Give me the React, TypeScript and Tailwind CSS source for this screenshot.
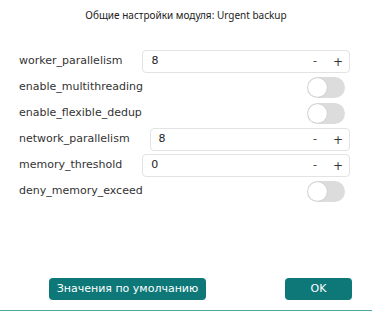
type Setting =
  | { key: string; kind: 'number'; value: number }
  | { key: string; kind: 'toggle'; value: boolean }

const settings: Setting[] = [
  { key: 'worker_parallelism', kind: 'number', value: 8 },
  { key: 'enable_multithreading', kind: 'toggle', value: false },
  { key: 'enable_flexible_dedup', kind: 'toggle', value: false },
  { key: 'network_parallelism', kind: 'number', value: 8 },
  { key: 'memory_threshold', kind: 'number', value: 0 },
  { key: 'deny_memory_exceed', kind: 'toggle', value: false }
]

function NumberField({ value }: { value: number }) {
  return (
    <div className="flex flex-1 items-center h-[23px] pl-[8px] pr-[6px] border border-[#e3e3e3] rounded-[4px] bg-white">
      <span className="flex-1 text-[11px] text-[#222]">{value}</span>
      <span className="w-[10px] text-center text-[11px] text-[#333] mr-[13px]">-</span>
      <span className="w-[10px] text-center text-[12px] text-[#333]">+</span>
    </div>
  )
}

function Toggle({ on }: { on: boolean }) {
  return (
    <div className="flex-1 flex justify-end pr-[5px]">
      <div
        className={`w-[38px] h-[21px] rounded-full p-[1px] flex items-center ${
          on ? 'bg-[#0f7a7a] justify-end' : 'bg-[#dcdcdc] justify-start'
        }`}
      >
        <div className="w-[19px] h-[19px] rounded-full bg-white shadow-[0_0_1px_rgba(0,0,0,0.25)]" />
      </div>
    </div>
  )
}

export default function App() {
  return (
    <div
      className="w-[372px] h-[311px] bg-white flex flex-col text-[#2a2a2a]"
      style={{ fontFamily: '"DejaVu Sans", sans-serif' }}
    >
      {/* Title */}
      <div
        className="h-[30px] flex items-center justify-center text-[10px] text-[#222]"
        style={{ fontFamily: '"Noto Sans", sans-serif' }}
      >
        Общие настройки модуля: Urgent backup
      </div>

      {/* Settings */}
      <div className="flex flex-col gap-[3px] pl-[19px] pr-[22px] mt-[20px]">
        {settings.map((s) => (
          <div key={s.key} className="flex items-center h-[23px] gap-[20px]">
            <span className="text-[11px] text-[#333]">{s.key}</span>
            {s.kind === 'number' ? <NumberField value={s.value} /> : <Toggle on={s.value} />}
          </div>
        ))}
      </div>

      {/* Buttons */}
      <div className="mt-auto flex items-center justify-between pl-[49px] pr-[20px] pb-[10px]">
        <button className="h-[22px] w-[157px] rounded-[4px] bg-[#0e7878] text-white text-[11px]">
          Значения по умолчанию
        </button>
        <button className="h-[22px] w-[67px] rounded-[4px] bg-[#0e7878] text-white text-[11px]">
          OK
        </button>
      </div>
      <div className="h-[1px] bg-[#4fa9a2]" />
    </div>
  )
}
